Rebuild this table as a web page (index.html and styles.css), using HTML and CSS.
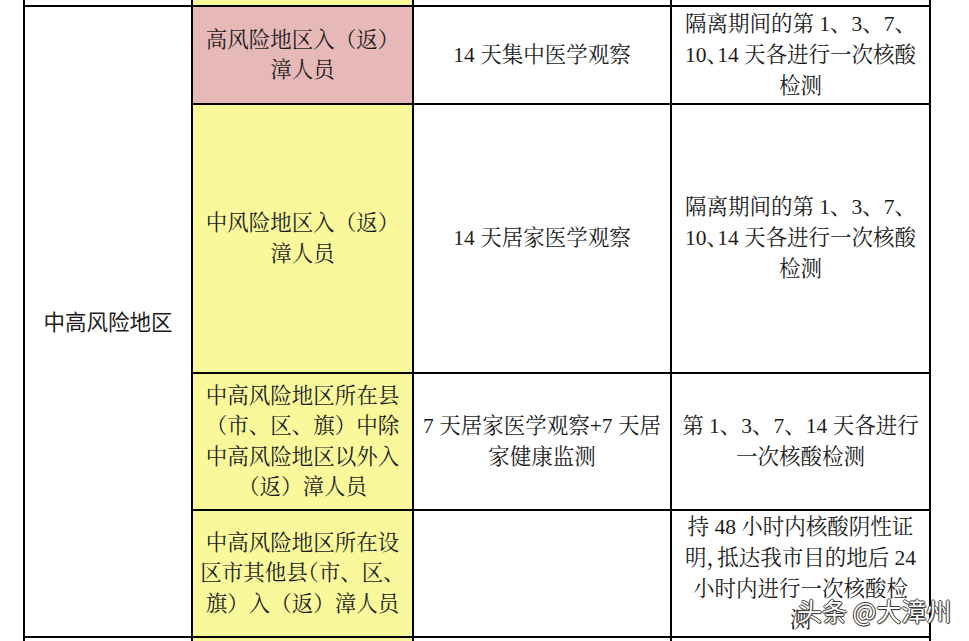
FILE: index.html
```html
<!DOCTYPE html>
<html lang="zh-CN">
<head>
<meta charset="utf-8">
<title>中高风险地区</title>
<link rel="stylesheet" href="styles.css">
</head>
<body>
<div class="page">
  <div class="sheet">
    <div class="cell"></div>
    <div class="cell yellow"></div>
    <div class="cell"></div>
    <div class="cell"></div>

    <div class="cell area"><p class="txt">中高风险地区</p></div>

    <div class="cell pink"><p class="txt">高风险地区入（返）<br>漳人员</p></div>
    <div class="cell"><p class="txt">14 天集中医学观察</p></div>
    <div class="cell wide"><p class="txt">隔离期间的第 1、3、7、<br>10<span class="half">、</span>14 天各进行一次核酸<br>检测</p></div>

    <div class="cell yellow"><p class="txt">中风险地区入（返）<br>漳人员</p></div>
    <div class="cell"><p class="txt">14 天居家医学观察</p></div>
    <div class="cell wide"><p class="txt">隔离期间的第 1、3、7、<br>10<span class="half">、</span>14 天各进行一次核酸<br>检测</p></div>

    <div class="cell yellow"><p class="txt">中高风险地区所在县<br>（市、区、旗）中除<br>中高风险地区以外入<br>（返）漳人员</p></div>
    <div class="cell"><p class="txt">7 天居家医学观察+7 天居<br>家健康监测</p></div>
    <div class="cell wide"><p class="txt">第 1、3、7、14 天各进行<br>一次核酸检测</p></div>

    <div class="cell yellow"><p class="txt">中高风险地区所在设<br>区市其他县<span class="half">（</span>市、区、<br>旗）入（返）漳人员</p></div>
    <div class="cell"></div>
    <div class="cell wide"><p class="txt">持 48 小时内核酸阴性证<br>明<span class="half">，</span>抵达我市目的地后 24<br>小时内进行一次核酸检<br>测</p></div>

    <div class="cell"></div>
    <div class="cell yellow"></div>
    <div class="cell"></div>
    <div class="cell"></div>
  </div>
  <div class="watermark">头条 @大漳州</div>
</div>
</body>
</html>
```

FILE: styles.css
```css
html, body {
  margin: 0;
  padding: 0;
  background: #ffffff;
}

.page {
  position: relative;
  width: 969px;
  height: 641px;
  overflow: hidden;
  background: #ffffff;
}

.sheet {
  margin-left: 23px;
  width: 904px;
  display: grid;
  grid-template-columns: 166px 219px 256px 257px;
  grid-template-rows: 5px 96px 267px 135px 125px 20px;
  gap: 2px;
  padding: 0 2px;
  background: #000000;
}

.cell {
  background: #ffffff;
  display: flex;
  align-items: center;
  justify-content: center;
  font-family: "Liberation Serif", "Noto Serif CJK SC", "Noto Sans CJK SC", serif;
  font-size: 21.5px;
  line-height: 30.5px;
  color: #1c1c1c;
}

.txt {
  margin: 0;
  text-align: center;
  white-space: nowrap;
}

.wide {
  line-height: 31px;
}

.area {
  grid-column: 1;
  grid-row: 2 / 6;
  font-family: "Noto Sans CJK SC", "Liberation Sans", sans-serif;
}

.pink {
  background: #e6b8b7;
}

.yellow {
  background: #f9f99c;
}

.half {
  font-feature-settings: "halt";
}

.watermark {
  position: absolute;
  left: 797px;
  top: 594px;
  font-family: "Noto Sans CJK SC", "Liberation Sans", sans-serif;
  font-size: 25px;
  line-height: 32px;
  color: #ffffff;
  white-space: nowrap;
  text-shadow:
    1px 0 0 #3a3a3a,
    -1px 0 0 #3a3a3a,
    0 1px 0 #3a3a3a,
    0 -1px 0 #3a3a3a,
    1px 1px 1px rgba(0, 0, 0, 0.6);
}
```
